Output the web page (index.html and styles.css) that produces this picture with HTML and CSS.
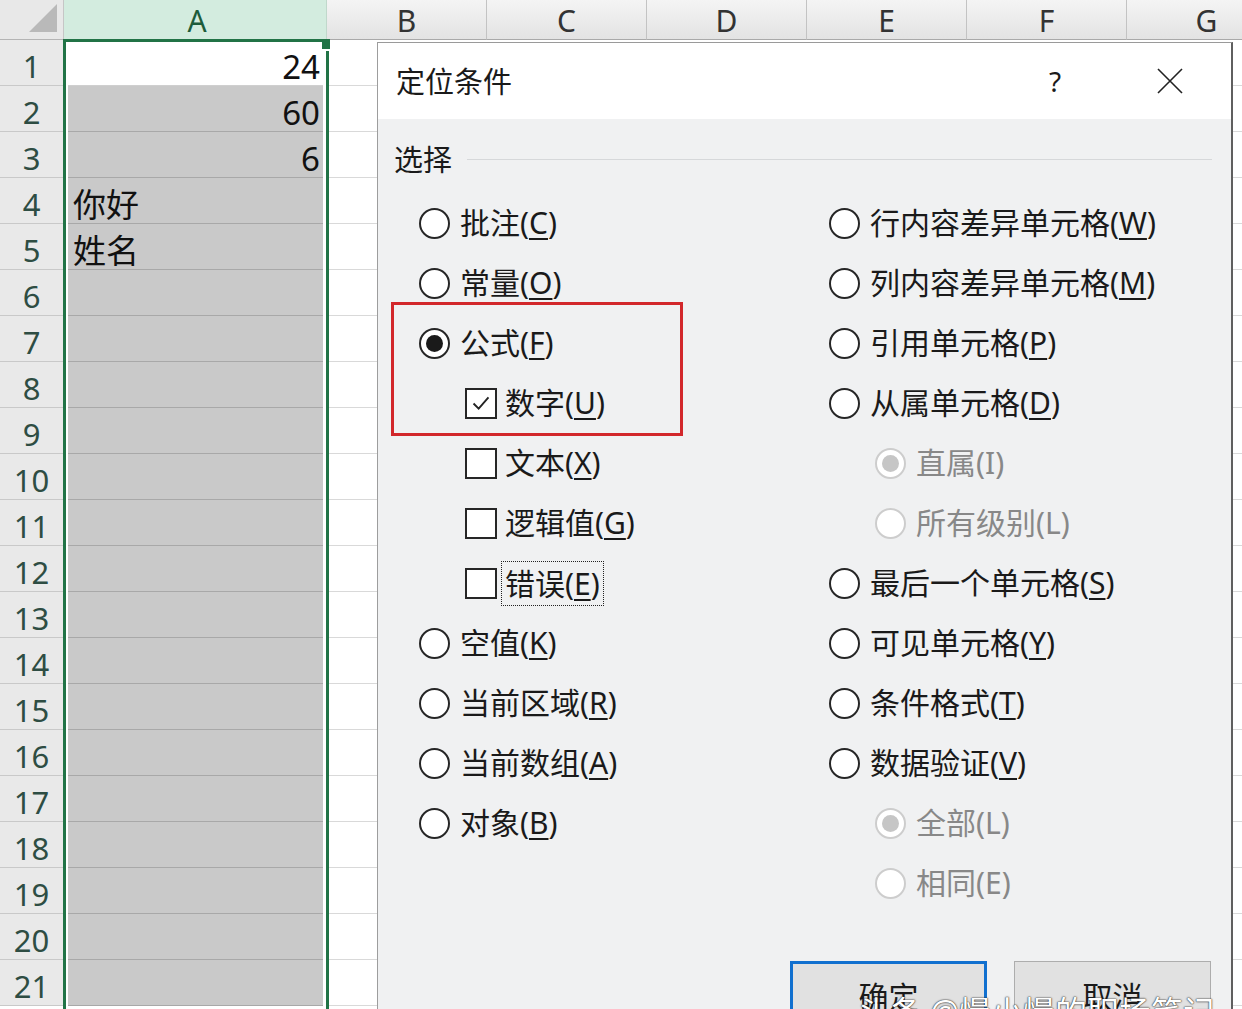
FILE: index.html
```html
<!DOCTYPE html>
<html lang="zh-CN">
<head>
<meta charset="utf-8">
<title>定位条件</title>
<link rel="stylesheet" href="styles.css">
</head>
<body>
<div class="app">
  <div class="sheet">
    <div class="corner"><span class="tri"></span></div>
    <div class="colh sel">A</div>
    <div class="colhs">
      <div class="colh">B</div><div class="colh">C</div><div class="colh">D</div><div class="colh">E</div><div class="colh">F</div><div class="colh">G</div>
    </div>

    <div class="rowh">1</div><div class="ca active"><div class="ci num">24</div></div><div class="cr"></div>
    <div class="rowh">2</div><div class="ca"><div class="ci num">60</div></div><div class="cr"></div>
    <div class="rowh">3</div><div class="ca"><div class="ci num">6</div></div><div class="cr"></div>
    <div class="rowh">4</div><div class="ca"><div class="ci">你好</div></div><div class="cr"></div>
    <div class="rowh">5</div><div class="ca"><div class="ci">姓名</div></div><div class="cr"></div>
    <div class="rowh">6</div><div class="ca"><div class="ci"></div></div><div class="cr"></div>
    <div class="rowh">7</div><div class="ca"><div class="ci"></div></div><div class="cr"></div>
    <div class="rowh">8</div><div class="ca"><div class="ci"></div></div><div class="cr"></div>
    <div class="rowh">9</div><div class="ca"><div class="ci"></div></div><div class="cr"></div>
    <div class="rowh">10</div><div class="ca"><div class="ci"></div></div><div class="cr"></div>
    <div class="rowh">11</div><div class="ca"><div class="ci"></div></div><div class="cr"></div>
    <div class="rowh">12</div><div class="ca"><div class="ci"></div></div><div class="cr"></div>
    <div class="rowh">13</div><div class="ca"><div class="ci"></div></div><div class="cr"></div>
    <div class="rowh">14</div><div class="ca"><div class="ci"></div></div><div class="cr"></div>
    <div class="rowh">15</div><div class="ca"><div class="ci"></div></div><div class="cr"></div>
    <div class="rowh">16</div><div class="ca"><div class="ci"></div></div><div class="cr"></div>
    <div class="rowh">17</div><div class="ca"><div class="ci"></div></div><div class="cr"></div>
    <div class="rowh">18</div><div class="ca"><div class="ci"></div></div><div class="cr"></div>
    <div class="rowh">19</div><div class="ca"><div class="ci"></div></div><div class="cr"></div>
    <div class="rowh">20</div><div class="ca"><div class="ci"></div></div><div class="cr"></div>
    <div class="rowh">21</div><div class="ca"><div class="ci"></div></div><div class="cr"></div>
  </div>

  <div class="selbox"><span class="handle"></span></div>

  <div class="dialog">
    <div class="titlebar">
      <span class="title">定位条件</span>
      <span class="tbtn help">?</span>
      <span class="tbtn close"><svg width="28" height="28" viewBox="0 0 28 28"><path d="M2 2 L26 26 M26 2 L2 26" stroke="#222" stroke-width="1.6" fill="none"/></svg></span>
    </div>
    <div class="body">
      <div class="legend"><span>选择</span></div>
      <div class="opts">
        <div class="col">
          <div class="opt"><span class="radio"></span><span class="lbl">批注(<u>C</u>)</span></div>
          <div class="opt"><span class="radio"></span><span class="lbl">常量(<u>O</u>)</span></div>
          <div class="opt"><span class="radio on"></span><span class="lbl">公式(<u>F</u>)</span></div>
          <div class="opt chk"><span class="box"><svg width="30" height="30" viewBox="0 0 30 30"><path d="M7 15.5 L12.5 21 L23 9" stroke="#222" stroke-width="2" fill="none"/></svg></span><span class="lbl">数字(<u>U</u>)</span></div>
          <div class="opt chk"><span class="box"></span><span class="lbl">文本(<u>X</u>)</span></div>
          <div class="opt chk"><span class="box"></span><span class="lbl">逻辑值(<u>G</u>)</span></div>
          <div class="opt chk"><span class="box"></span><span class="lbl focus">错误(<u>E</u>)</span></div>
          <div class="opt"><span class="radio"></span><span class="lbl">空值(<u>K</u>)</span></div>
          <div class="opt"><span class="radio"></span><span class="lbl">当前区域(<u>R</u>)</span></div>
          <div class="opt"><span class="radio"></span><span class="lbl">当前数组(<u>A</u>)</span></div>
          <div class="opt"><span class="radio"></span><span class="lbl">对象(<u>B</u>)</span></div>
        </div>
        <div class="col">
          <div class="opt"><span class="radio"></span><span class="lbl">行内容差异单元格(<u>W</u>)</span></div>
          <div class="opt"><span class="radio"></span><span class="lbl">列内容差异单元格(<u>M</u>)</span></div>
          <div class="opt"><span class="radio"></span><span class="lbl">引用单元格(<u>P</u>)</span></div>
          <div class="opt"><span class="radio"></span><span class="lbl">从属单元格(<u>D</u>)</span></div>
          <div class="opt sub dis"><span class="radio on"></span><span class="lbl">直属(I)</span></div>
          <div class="opt sub dis"><span class="radio"></span><span class="lbl">所有级别(L)</span></div>
          <div class="opt"><span class="radio"></span><span class="lbl">最后一个单元格(<u>S</u>)</span></div>
          <div class="opt"><span class="radio"></span><span class="lbl">可见单元格(<u>Y</u>)</span></div>
          <div class="opt"><span class="radio"></span><span class="lbl">条件格式(<u>T</u>)</span></div>
          <div class="opt"><span class="radio"></span><span class="lbl">数据验证(<u>V</u>)</span></div>
          <div class="opt sub dis"><span class="radio on"></span><span class="lbl">全部(L)</span></div>
          <div class="opt sub dis"><span class="radio"></span><span class="lbl">相同(E)</span></div>
        </div>
      </div>
      <div class="btns">
        <div class="btn primary">确定</div>
        <div class="btn">取消</div>
      </div>
    </div>
    <div class="redbox"></div>
  </div>

  <div class="watermark">头条 @慢小慢的职场笔记</div>
</div>
</body>
</html>
```

FILE: styles.css
```css
* { box-sizing: border-box; }
html, body { margin: 0; padding: 0; }
body {
  width: 1242px;
  height: 1009px;
  overflow: hidden;
  background: #fff;
  font-family: "Noto Sans", "Noto Sans CJK SC", sans-serif;
  color: #1a1a1a;
}
.app { position: relative; width: 1242px; height: 1009px; overflow: hidden; }

/* ---------- sheet ---------- */
.sheet {
  display: grid;
  grid-template-columns: 64px 263px 1fr;
  grid-template-rows: 40px repeat(21, 46px);
}
.corner {
  position: relative;
  background: #e8e8e8;
  border-right: 1px solid #c6c6c6;
  border-bottom: 1px solid #b4b4b4;
}
.tri {
  position: absolute;
  right: 6px;
  bottom: 7px;
  width: 0;
  height: 0;
  border-left: 28px solid transparent;
  border-bottom: 28px solid #b9b9b9;
}
.colhs { display: flex; overflow: hidden; }
.colh {
  flex: none;
  width: 160px;
  height: 40px;
  background: linear-gradient(#f4f4f4, #e3e3e3);
  border-right: 1px solid #c3c3c3;
  border-bottom: 1px solid #a9a9a9;
  display: flex;
  align-items: center;
  justify-content: center;
  font-size: 30px;
  line-height: 1;
  color: #333;
  padding-top: 2px;
}
.colh.sel {
  width: auto;
  background: #d3ecdf;
  color: #1d5c3b;
  border-right: 1px solid #c0d8cb;
  padding-left: 4px;
}
.rowh {
  background: #e9e9e9;
  border-bottom: 1px solid #c9c9c9;
  border-right: 1px solid #b5b5b5;
  display: flex;
  align-items: center;
  justify-content: center;
  font-size: 31px;
  line-height: 1;
  color: #2e4d43;
  padding-top: 8px;
}
.ca { background: #fff; padding: 0 4px; }
.ci {
  height: 100%;
  background: #c9c9c9;
  border-bottom: 1px solid #a8a8a8;
  display: flex;
  align-items: flex-end;
  font-size: 33px;
  line-height: 1;
  color: #111;
  padding: 0 3px 2px 5px;
}
.ci.num { justify-content: flex-end; }
.ca.active .ci { background: #fff; border-bottom-color: #cfcfcf; }
.cr { border-bottom: 1px solid #d9d9d9; background: #fff; }

.selbox {
  position: absolute;
  left: 63px;
  top: 39px;
  width: 266px;
  height: 990px;
  border: 3px solid #217346;
}
.handle {
  position: absolute;
  right: -4px;
  top: -3px;
  width: 8px;
  height: 10px;
  background: #217346;
  box-shadow: 0 2px 0 #fff;
}

/* ---------- dialog ---------- */
.dialog {
  position: absolute;
  left: 377px;
  top: 42px;
  width: 856px;
  height: 990px;
  background: #f0f1f2;
  border-left: 1px solid #9d9d9d;
  border-right: 2px solid #5f5f5f;
  border-top: 1px solid #9a9a9a;
}
.titlebar {
  height: 76px;
  background: #fff;
  display: flex;
  align-items: center;
  padding-left: 18px;
  padding-right: 31px;
}
.title { font-size: 29px; line-height: 1; flex: 1; }
.tbtn {
  width: 60px;
  display: flex;
  justify-content: center;
  align-items: center;
  font-size: 28px;
  line-height: 1;
}
.help { margin-right: 55px; font-family: "Noto Sans", sans-serif; }

.body { padding: 0; }
.legend {
  display: flex;
  align-items: center;
  height: 40px;
  margin: 20px 19px 0 16px;
}
.legend span { font-size: 29px; line-height: 1; }
.legend::after {
  content: "";
  flex: 1;
  height: 1px;
  margin-left: 15px;
  background: #d6d8da;
}
.opts {
  display: grid;
  grid-template-columns: 410px 1fr;
  padding-left: 41px;
  margin-top: 14px;
}
.col { display: flex; flex-direction: column; }
.opt {
  height: 60px;
  display: flex;
  align-items: center;
  gap: 10px;
}
.opt.sub { padding-left: 46px; }
.opt.chk { padding-left: 46px; gap: 8px; }
.lbl {
  font-size: 30px;
  line-height: 36px;
  white-space: nowrap;
  color: #1a1a1a;
}
.lbl u {
  text-decoration-thickness: 2px;
  text-underline-offset: 4px;
}
.lbl.focus {
  border: 1px dotted #222;
  line-height: 43px;
  padding: 0 3px;
  margin-left: -4px;
}
.radio {
  flex: none;
  width: 31px;
  height: 31px;
  border-radius: 50%;
  border: 2px solid #262626;
  background: #fff;
  display: flex;
  align-items: center;
  justify-content: center;
}
.radio.on::after {
  content: "";
  width: 17px;
  height: 17px;
  border-radius: 50%;
  background: #1a1a1a;
}
.opt.dis .radio { border: 2px solid #cdcdcd; }
.opt.dis .radio.on::after { background: #c6c6c6; }
.opt.dis .lbl { color: #888; }
.box {
  flex: none;
  width: 32px;
  height: 31px;
  border: 2px solid #262626;
  background: #fff;
  display: flex;
  align-items: center;
  justify-content: center;
}
.box svg { display: block; }

.btns {
  display: flex;
  justify-content: flex-end;
  gap: 27px;
  padding-right: 20px;
  margin-top: 48px;
}
.btn {
  width: 197px;
  height: 72px;
  background: #e1e1e1;
  border: 1px solid #adadad;
  display: flex;
  align-items: center;
  justify-content: center;
  font-size: 30px;
  line-height: 1;
}
.btn.primary { border: 3px solid #1170cf; }

.redbox {
  position: absolute;
  left: 13px;
  top: 259px;
  width: 292px;
  height: 134px;
  border: 3px solid #d2272b;
}

.watermark {
  position: absolute;
  left: 858px;
  top: 996px;
  font-size: 32px;
  line-height: 1;
  color: #fff;
  white-space: nowrap;
  text-shadow: 0 0 2px #333, 0 0 1px #000;
}
```
